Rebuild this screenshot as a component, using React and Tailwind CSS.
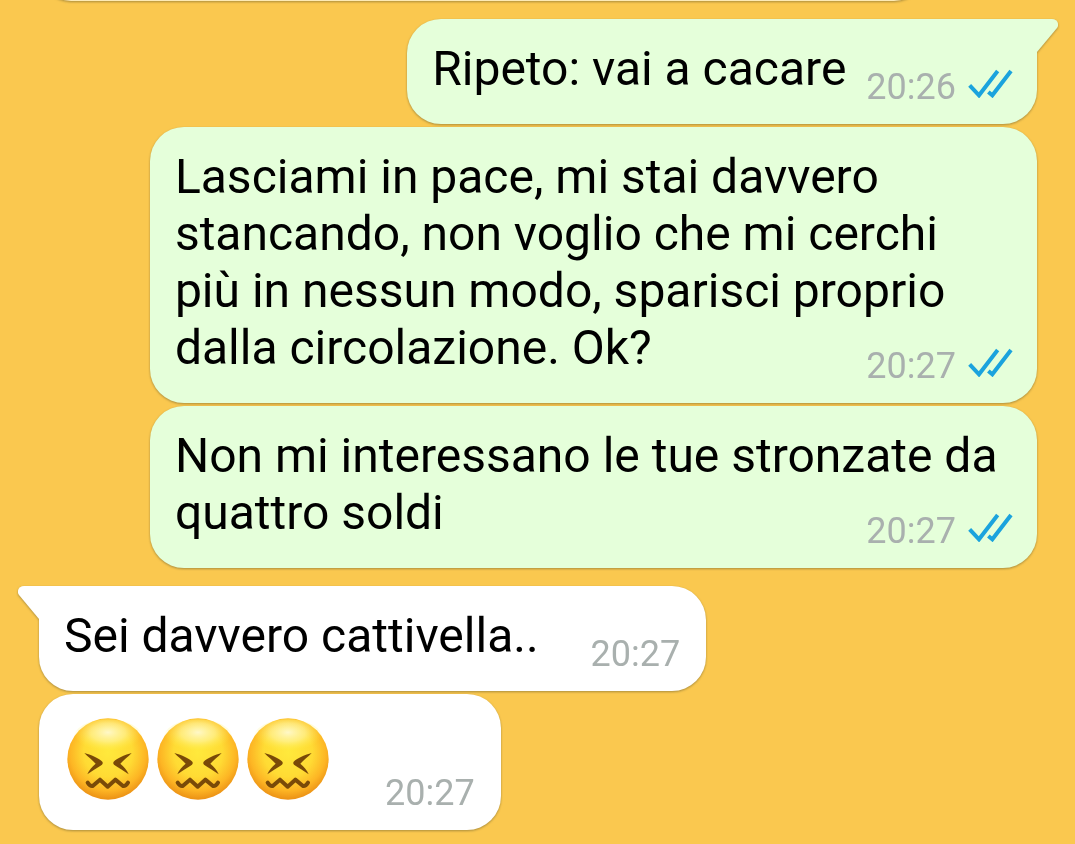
import React from 'react';
import clsx from 'clsx';

const MESSAGES = [
  { id: 1, out: true, first: true, time: '20:26', text: 'Ripeto: vai a cacare' },
  {
    id: 2,
    out: true,
    time: '20:27',
    text: 'Lasciami in pace, mi stai davvero stancando, non voglio che mi cerchi più in nessun modo, sparisci proprio dalla circolazione. Ok?',
  },
  { id: 3, out: true, time: '20:27', text: 'Non mi interessano le tue stronzate da quattro soldi' },
  { id: 4, out: false, first: true, time: '20:27', text: 'Sei davvero cattivella..' },
  { id: 5, out: false, time: '20:27', emoji: 3 },
];

function Confounded() {
  return (
    <svg viewBox="0 0 246 246" className="size-[82px]" role="img" aria-label="faccina esasperata">
      <defs>
        <radialGradient id="face" cx="0.5" cy="0.42" r="0.6">
          <stop offset="0" stopColor="#ffe93c" />
          <stop offset="0.5" stopColor="#ffdb34" />
          <stop offset="0.78" stopColor="#fdb524" />
          <stop offset="1" stopColor="#e88a12" />
        </radialGradient>
        <radialGradient id="shine" cx="0.5" cy="0.35" r="0.5">
          <stop offset="0" stopColor="#fffbd8" stopOpacity="0.9" />
          <stop offset="0.5" stopColor="#fff7a8" stopOpacity="0.6" />
          <stop offset="1" stopColor="#fff04a" stopOpacity="0" />
        </radialGradient>
      </defs>
      <circle cx="123" cy="123" r="122" fill="url(#face)" />
      <ellipse cx="123" cy="60" rx="104" ry="56" fill="url(#shine)" />
      <g fill="#7a4a08">
        <path d="M52 105C70 110 98 121 106 131Q109 136 105 140C92 149 76 157 61 169C66 156 76 145 86 137C76 126 62 116 52 105Z" />
        <path d="M194 105C176 110 148 121 140 131Q137 136 141 140C154 149 170 157 185 169C180 156 170 145 160 137C170 126 184 116 194 105Z" />
      </g>
      <path
        d="M62 194Q70 206 77 204L99 185L122 206L145 185L168 204Q175 206 183 194"
        fill="none"
        stroke="#7a4a08"
        strokeWidth="12"
        strokeLinecap="round"
        strokeLinejoin="round"
      />
    </svg>
  );
}

function ReadTicks() {
  return (
    <svg viewBox="0 0 135 87" className="h-[29px] w-[45px]" role="img" aria-label="Letto">
      <g fill="none" stroke="#1ba3dd" strokeWidth="12">
        <path d="M5 49L33 79L89 6" />
        <path d="M61 69L73 79L129 6" />
      </g>
    </svg>
  );
}

function Tail({ out }) {
  return (
    <svg
      viewBox="0 0 21 33"
      aria-hidden="true"
      className={clsx(
        'absolute top-0 h-[33px] w-[21px]',
        out ? 'left-full text-[#e5ffda]' : 'right-full -scale-x-100 text-white'
      )}
    >
      <path d="M0 0H15C20 0 23 5 20 9L0 33Z" fill="currentColor" />
    </svg>
  );
}

function Meta({ time, read, className }) {
  return (
    <div className={clsx('flex items-end gap-3', className)}>
      <time className="text-[36px] leading-9 text-[#a9b0ae]">{time}</time>
      {read && (
        <span className="pb-[7px]">
          <ReadTicks />
        </span>
      )}
    </div>
  );
}

function Bubble({ message }) {
  const { out, first, time, text, emoji } = message;

  return (
    <li
      className={clsx(
        'relative max-w-8/9 pt-[21px] pb-[19px] pl-[25px] rounded-[34px] drop-shadow-[0_1px_1px_rgba(90,80,40,0.5)]',
        out ? 'self-end bg-[#e5ffda] pr-6' : 'self-start bg-white pr-[26px]',
        first && 'mt-[15px]',
        first && (out ? 'rounded-tr-none' : 'rounded-tl-none')
      )}
    >
      {first && <Tail out={out} />}

      {emoji ? (
        <div className="flex items-end gap-14 pl-[3px]">
          <div className="flex gap-2 pt-[3px] pb-[11px]">
            {Array.from({ length: emoji }, (_, i) => (
              <Confounded key={i} />
            ))}
          </div>
          <Meta time={time} />
        </div>
      ) : (
        <div className="flow-root text-[48px] leading-[57px] text-black">
          {text}
          {/* Floats beside the last line, hanging slightly below it */}
          <Meta time={time} read={out} className={clsx('float-right mt-[29px]', out ? 'ml-5' : 'ml-[52px]')} />
        </div>
      )}
    </li>
  );
}

export default function App() {
  return (
    <main className="min-h-screen overflow-hidden bg-[#fac84f] pl-[39px] pr-[38px] font-['Roboto',sans-serif]">
      <ol className="flex flex-col gap-[3px]">
        {/* Previous message, scrolled almost out of view */}
        <li className="-mt-[63px] h-16 w-8/9 rounded-[34px] bg-[#fdeab5] drop-shadow-[0_1px_1px_rgba(90,80,40,0.5)]" />
        {MESSAGES.map(m => (
          <Bubble key={m.id} message={m} />
        ))}
      </ol>
    </main>
  );
}
